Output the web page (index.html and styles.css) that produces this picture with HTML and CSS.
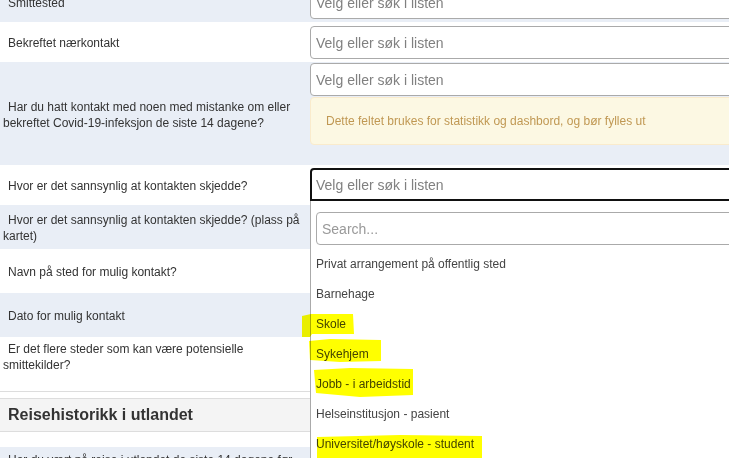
FILE: index.html
```html
<!DOCTYPE html>
<html lang="no">
<head>
<meta charset="utf-8">
<title>Smitteoppsporing</title>
<link rel="stylesheet" href="styles.css">
</head>
<body>
<div class="page">
  <div class="form">
    <div class="row alt">
      <div class="label">Smittested</div>
      <div class="field"><div class="select">Velg eller søk i listen</div></div>
    </div>
    <div class="row">
      <div class="label">Bekreftet nærkontakt</div>
      <div class="field"><div class="select">Velg eller søk i listen</div></div>
    </div>
    <div class="row alt">
      <div class="label">Har du hatt kontakt med noen med mistanke om eller bekreftet Covid-19-infeksjon de siste 14 dagene?</div>
      <div class="field field-alert">
        <div class="select">Velg eller søk i listen</div>
        <div class="alert">Dette feltet brukes for statistikk og dashbord, og bør fylles ut</div>
      </div>
    </div>
    <div class="row">
      <div class="label">Hvor er det sannsynlig at kontakten skjedde?</div>
      <div class="field field-open">
        <div class="select open">
          Velg eller søk i listen
          <div class="dropdown">
            <div class="dd-search"><div class="search">Search...</div></div>
            <ul class="options">
              <li>Privat arrangement på offentlig sted</li>
              <li>Barnehage</li>
              <li>Skole</li>
              <li>Sykehjem</li>
              <li>Jobb - i arbeidstid</li>
              <li>Helseinstitusjon - pasient</li>
              <li>Universitet/høyskole - student</li>
              <li>Universitet/høyskole - ansatt</li>
            </ul>
          </div>
        </div>
      </div>
    </div>
    <div class="row alt tall">
      <div class="label">Hvor er det sannsynlig at kontakten skjedde? (plass på kartet)</div>
      <div class="field"><div class="text-input"></div></div>
    </div>
    <div class="row tall">
      <div class="label">Navn på sted for mulig kontakt?</div>
      <div class="field"><div class="text-input"></div></div>
    </div>
    <div class="row alt tall">
      <div class="label">Dato for mulig kontakt</div>
      <div class="field"><div class="text-input"></div></div>
    </div>
    <div class="row last">
      <div class="label">Er det flere steder som kan være potensielle smittekilder?</div>
      <div class="field"><div class="select">Velg eller søk i listen</div></div>
    </div>
  </div>
  <h4 class="section-head">Reisehistorikk i utlandet</h4>
  <div class="form">
    <div class="row alt">
      <div class="label">Har du vært på reise i utlandet de siste 14 dagene før symptomdebut eller prøvetaking?</div>
      <div class="field"><div class="select">Velg eller søk i listen</div></div>
    </div>
  </div>
</div>
<svg class="marker" viewBox="0 0 729 458" width="729" height="458" aria-hidden="true">
  <path d="M302,316 L311,314 L353,314 L354,334 L312,334 L310,337 L302,337 Z"/>
  <path d="M309,341 L330,339 L381,340 L381,361 L340,362 L310,360 Z"/>
  <path d="M314,370 L350,368 L413,369 L413,395 L360,397 L316,393 Z"/>
  <path d="M317,437 L400,435 L482,436 L482,458 L317,458 Z"/>
</svg>
</body>
</html>
```

FILE: styles.css
```css
html, body {
  margin: 0;
  padding: 0;
  overflow: hidden;
  background: #fff;
}

body {
  position: relative;
  width: 729px;
  height: 458px;
  font-family: "Liberation Sans", Arial, sans-serif;
  color: #333;
}

.page {
  width: 820px;
  margin-top: -18px;
}

.row {
  display: flex;
  align-items: center;
  background: #fff;
}

.row.alt {
  background: #e9eef6;
}

.label {
  width: 307px;
  flex: none;
  padding-left: 3px;
  padding-top: 2px;
  text-indent: 5px;
  font-size: 12px;
  line-height: 16px;
}

.field {
  flex: 1;
  padding: 4px 0 3px;
}

.field-alert {
  padding: 1px 0 0;
}

.field-open {
  padding: 3px 0 4px;
}

.row.tall .field {
  padding: 4px 0;
}

.row.last {
  padding-bottom: 16px;
  border-bottom: 1px solid #ddd;
}

.row.last .field {
  padding: 2px 0 3px;
}

.select {
  position: relative;
  box-sizing: border-box;
  height: 33px;
  border: 1px solid #aaa;
  border-radius: 4px;
  background: #fff;
  padding: 1px 0 0 5px;
  font-size: 14px;
  line-height: 30px;
  color: #808080;
}

.select.open {
  border: 2px solid #111;
  border-radius: 4px 4px 0 0;
  padding: 1px 0 0 4px;
  line-height: 28px;
}

.text-input {
  box-sizing: border-box;
  height: 36px;
  border: 1px solid #ccc;
  border-radius: 4px;
  background: #fff;
}

.alert {
  margin: 1px 0 20px;
  padding: 15px;
  border: 1px solid #faebcc;
  border-radius: 4px;
  background: #fcf8e3;
  color: #c09853;
  font-size: 12px;
  line-height: 16px;
}

.dropdown {
  position: absolute;
  top: calc(100% + 2px);
  left: -2px;
  width: 520px;
  height: 300px;
  box-sizing: border-box;
  background: #fff;
  border: 1px solid #aaa;
  border-top: none;
  z-index: 5;
  line-height: normal;
}

.dd-search {
  padding: 11px 4px 4px 5px;
}

.search {
  box-sizing: border-box;
  height: 33px;
  border: 1px solid #aaa;
  border-radius: 4px;
  padding: 1px 0 0 5px;
  font-size: 14px;
  line-height: 30px;
  color: #999;
}

.options {
  list-style: none;
  margin: 0;
  padding: 0;
}

.options li {
  height: 30px;
  padding-left: 5px;
  font-size: 12px;
  line-height: 31px;
  color: #444;
}

.section-head {
  margin: 6px 0 15px;
  padding: 0 0 0 8px;
  height: 32px;
  line-height: 32px;
  background: #f4f4f4;
  border-top: 1px solid #ddd;
  border-bottom: 1px solid #ddd;
  font-size: 16px;
  font-weight: bold;
  color: #333;
}

.marker {
  position: absolute;
  top: 0;
  left: 0;
  fill: #ffff00;
  mix-blend-mode: multiply;
  pointer-events: none;
  z-index: 10;
}
```
